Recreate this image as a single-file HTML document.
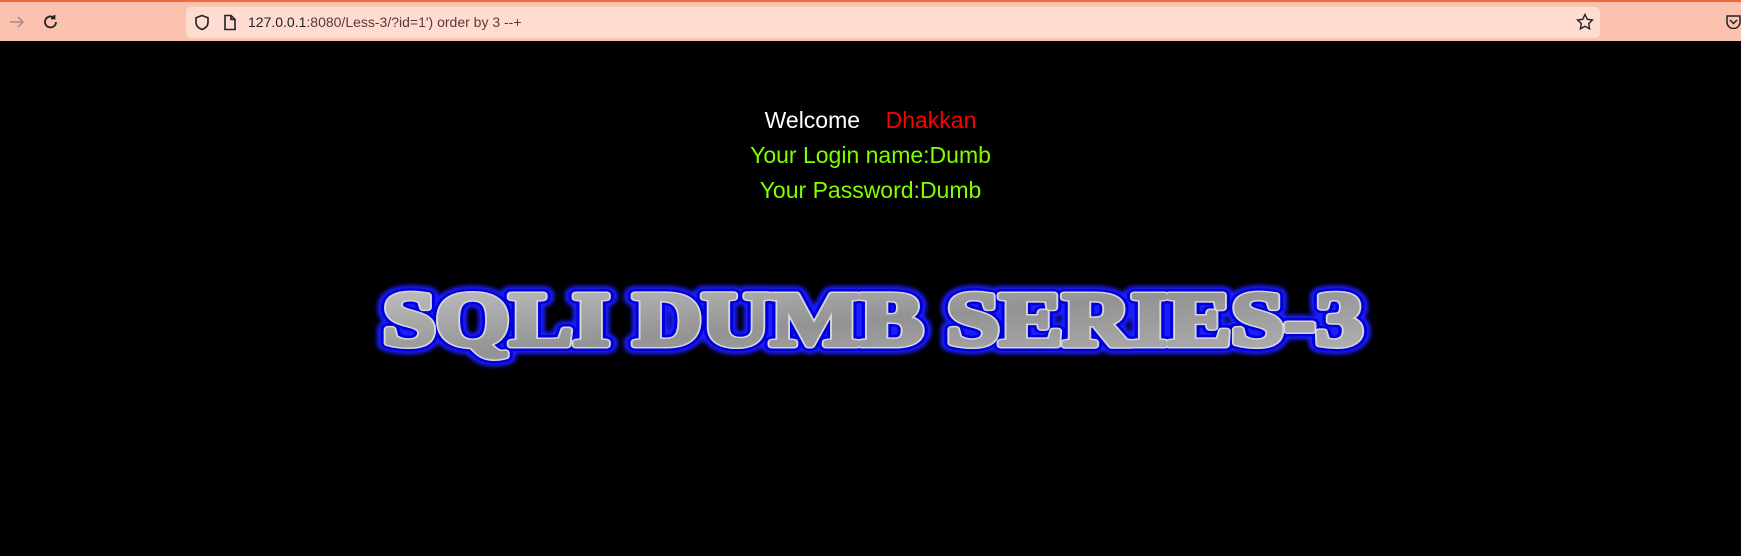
<!DOCTYPE html>
<html><head><meta charset="utf-8"><style>
html,body{margin:0;padding:0;width:1741px;height:556px;overflow:hidden;background:#000;font-family:"Liberation Sans",sans-serif}
.bar{position:absolute;left:0;top:0;width:1741px;height:41px;background:#fbc2b0;border-top:2px solid #f4673a;box-sizing:border-box}
.url{position:absolute;left:186px;top:5px;width:1414px;height:31px;background:#ffdcd2;border-radius:5px}
.url span{position:absolute;left:62px;top:7px;font-size:14px;color:#5a3a33}
.c{position:absolute;left:0;width:1741px;text-align:center;font-size:23px}
</style></head><body>
<div class="bar">
<svg style="position:absolute;left:8px;top:11px" width="18" height="18"><path d="M2 9h13M10 4l5 5-5 5" stroke="#a88" stroke-width="1.5" fill="none"/></svg>
<svg style="position:absolute;left:42px;top:11px" width="18" height="18"><path d="M14 9a5.5 5.5 0 1 1-2-4.3M12.5 2v3.5H9" stroke="#222" stroke-width="1.8" fill="none"/></svg>
<div class="url">
<svg style="position:absolute;left:8px;top:7px" width="16" height="17"><path d="M8 1.5l6 2.3v4.5c0 3.5-2.7 6-6 7.2-3.3-1.2-6-3.7-6-7.2V3.8z" stroke="#222" stroke-width="1.6" fill="none"/></svg>
<svg style="position:absolute;left:37px;top:7px" width="14" height="17"><path d="M2 1.5h6l4 4v10H2z M8 1.5v4h4" stroke="#222" stroke-width="1.6" fill="none"/></svg>
<span><b style="color:#222;font-weight:normal">127.0.0.1</b>:8080/Less-3/?id=1') order by 3 --+</span>
<svg style="position:absolute;left:1390px;top:6px" width="18" height="18"><path d="M9 1.5l2.3 4.8 5.2.7-3.8 3.6.9 5.2L9 13.3l-4.6 2.5.9-5.2L1.5 7l5.2-.7z" stroke="#222" stroke-width="1.4" fill="none"/></svg>
</div>
<svg style="position:absolute;left:1726px;top:12px" width="15" height="15"><path d="M1 2h13v6a6.5 6.5 0 0 1-13 0z M4 6l3.5 3.5L11 6" stroke="#222" stroke-width="1.5" fill="none"/></svg>
</div>
<div class="c" style="top:107px"><span style="color:#fff">Welcome</span>&nbsp;&nbsp;&nbsp;&nbsp;<span style="color:#f00">Dhakkan</span></div>
<div class="c" style="top:142px;color:#7fff00">Your Login name:Dumb</div>
<div class="c" style="top:177px;color:#7fff00">Your Password:Dumb</div>
<svg style="position:absolute;left:0;top:263px" width="1741" height="110">
<defs><linearGradient id="g" x1="0" y1="0" x2="1" y2="1"><stop offset="0" stop-color="#c4c4c4"/><stop offset=".5" stop-color="#939393"/><stop offset="1" stop-color="#b4b4b4"/></linearGradient>
<filter id="f"><feGaussianBlur stdDeviation="2"/></filter></defs>
<g font-family="Liberation Serif" font-weight="bold" font-size="76">
<text x="383" y="82" textLength="980" lengthAdjust="spacingAndGlyphs" fill="none" stroke="#1a1aff" stroke-width="18" stroke-linejoin="round" filter="url(#f)">SQLI DUMB SERIES-3</text>
<text x="383" y="82" textLength="980" lengthAdjust="spacingAndGlyphs" fill="none" stroke="#0000dd" stroke-width="12" stroke-linejoin="round">SQLI DUMB SERIES-3</text>
<text x="383" y="82" textLength="980" lengthAdjust="spacingAndGlyphs" fill="url(#g)" stroke="#d8d8d8" stroke-width="7" stroke-linejoin="round">SQLI DUMB SERIES-3</text>
<text x="383" y="82" textLength="980" lengthAdjust="spacingAndGlyphs" fill="url(#g)" stroke="url(#g)" stroke-width="4" stroke-linejoin="round">SQLI DUMB SERIES-3</text>
</g>
</svg>
</body></html>
